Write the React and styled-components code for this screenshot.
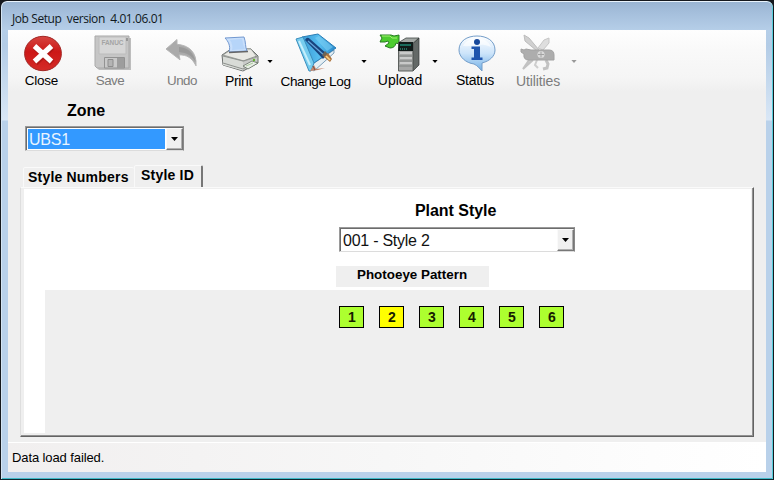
import React from 'react';
import styled, { createGlobalStyle } from 'styled-components';

const Global = createGlobalStyle`
  * { box-sizing: border-box; }
  html, body { margin: 0; background: #15181d; overflow: hidden; }
  body { font-family: "Liberation Sans", Arial, sans-serif; color: #000; }
`;
const Window = styled.main`
  width: 774px; height: 480px; display: flex; flex-direction: column;
  border: 1px solid #15181d; border-bottom-color: #102a32; border-radius: 7px 7px 0 0;
  padding: 0 7px 7px;
  box-shadow: inset 0 1px #e8f2fb, inset 1px 0 #d5e5f3, inset -1px 0 #56cdda, inset 0 -1px #3fbac8;
  background: linear-gradient(#98b3d1 0, #a5bfdc 12px, #b5cee8 29px, #b3cce6 45px, #d9e7f6 119px, #b9d1ea 120px, #b9d1ea 100%);
`;
const TitleBar = styled.header`
  height: 29px; flex: none; padding: 9px 0 0 4px; white-space: pre;
  font: 12px/18px "Open Sans", "Noto Sans", sans-serif; letter-spacing: -0.42px; color: #101820;
`;
const Client = styled.div`
  height: 442px; width: 758px; display: flex; flex-direction: column; background: #efefef;
`;
const Toolbar = styled.nav`
  height: 61px; flex: none; display: grid;
  grid-template-columns: 67px 70px 74px 39px 23px 69px 28px 44px 25px 56px 70px 1px;
  background: linear-gradient(#fefefe 0, #f9f9f9 20px, #f5f5f5 48px, #efefef 61px);
`;
const Tool = styled.div`
  display: flex; flex-direction: column; align-items: center;
  color: ${p => (p.$disabled ? '#7c7c7c' : '#000')};
`;
const IconBox = styled.div`
  height: 42px; flex: none; padding-top: 4px; margin-left: ${p => p.$shift || 0}px;
  svg { display: block; overflow: visible; }
`;
const Caption = styled.span`
  white-space: nowrap; font-size: ${p => p.$size || 14}px; letter-spacing: ${p => p.$spacing || 0}px;
  line-height: 16px; margin-top: ${p => p.$drop || 0}px;
`;
const Arrow = styled.div`
  display: flex; justify-content: center; padding-top: 30px;
  svg { flex: none; display: block; width: 6px; height: 3px; fill: ${p => (p.$disabled ? '#999' : '#000')}; }
`;
const ZoneArea = styled.section`
  padding: 11px 0 0 17px; height: 74px; flex: none;
`;
const Heading = styled.h2`
  margin: 0; font-size: 16px; line-height: 18px; font-weight: bold; letter-spacing: -0.05px; text-indent: ${p => p.$indent}px;
`;
const Combo = styled.div`
  display: flex; align-items: stretch; width: ${p => p.$width}px; height: ${p => p.$height}px; margin-top: ${p => p.$top}px;
  background: #fff; border: 1px solid #9a9a9a; border-right-color: #888; border-bottom-color: #dcdcdc;
  box-shadow: inset 1px 1px #6c6c6c; padding: 1px 0 0 1px;
`;
const ComboValue = styled.div`
  flex: 1; margin: 1px; padding-left: 1px; font-size: 16px; letter-spacing: -0.25px; line-height: 21px;
  background: ${p => (p.$selected ? '#3399ff' : '#fff')}; color: ${p => (p.$selected ? '#e9f4ff' : '#111')};
`;
const ComboButton = styled.div`
  width: 17px; display: flex; align-items: center; justify-content: center; background: #f0f0f0;
  border: 1px solid #fafafa; border-right-color: #777; border-bottom-color: #777;
  box-shadow: inset -1px -1px #b0b0b0;
  svg { display: block; width: 7px; height: 4px; }
`;
const Tabs = styled.div`
  height: 22px; flex: none; display: flex; align-items: flex-end; padding-left: 15px;
`;
const Tab = styled.div`
  width: ${p => p.$width}px; height: ${p => (p.$active ? 22 : 20)}px; padding-left: ${p => (p.$active ? 6 : 4)}px;
  font-size: 14px; font-weight: bold; line-height: ${p => (p.$active ? 19 : 19)}px; letter-spacing: ${p => p.$spacing}px;
  white-space: nowrap; border-top: 1px solid #fafafa; border-left: 1px solid #f9f9f9;
  border-right: ${p => (p.$active ? '2px solid #777' : '0')}; border-radius: 2px 2px 0 0;
`;
const Panel = styled.section`
  width: 734px; height: 250px; margin-left: 12px; flex: none; padding: 1px 2px 1px 3px;
  border: 1px solid #fafafa; border-left-color: #dedede; border-right: 1px solid #636363; border-bottom: 1px solid #636363;
  box-shadow: inset -1px -1px #929292;
`;
const StyleForm = styled.div`
  height: 101px; background: #fff; padding: 13px 0 0 315px;
`;
const PatternLabel = styled.div`
  width: 153px; height: 21px; margin: 14px 0 0 -3px; padding-left: 21px; background: #efefef;
  font-size: 13.4px; font-weight: bold; line-height: 17px; white-space: nowrap;
`;
const PatternArea = styled.div`
  height: 143px; border-left: 21px solid #fff; padding: 16px 0 0 294px; display: flex; gap: 15px;
`;
const Eye = styled.div`
  width: 25px; height: 22px; border: 1px solid #000; background: ${p => (p.$clear ? '#ffff00' : '#adff2f')};
  font-size: 14px; font-weight: bold; line-height: 20px; text-align: center; padding-left: 1px; color: #171c00;
`;
const StatusBar = styled.footer`
  height: 30px; margin-top: auto; padding: 6px 0 0 4px; border-top: 1px solid #fff;
  font-size: 13px; letter-spacing: -0.1px; line-height: 18px;
  background: linear-gradient(90deg, #f1efef, #f7f7f7 50%, #fdfdfd 85%, #fff);
`;

const Triangle = () => <svg viewBox="0 0 7 4"><path d="M0 0h7L3.5 4z" /></svg>;

const CloseIcon = () => (
  <svg width="38" height="38" viewBox="0 0 38 38">
    <defs><linearGradient id="red" x2="0" y2="1"><stop stopColor="#d64540" /><stop offset=".45" stopColor="#cc1817" /><stop offset="1" stopColor="#d42b27" /></linearGradient></defs>
    <ellipse cx="19" cy="19.5" rx="18.4" ry="17.2" fill="url(#red)" stroke="#a32927" />
    <path d="M10.5 12l17 16M27.5 12l-17 16" stroke="#8f1210" strokeWidth="6.5" opacity=".45" transform="translate(.7 1)" />
    <path d="M10.5 12l17 15.5M27.5 12l-17 15.5" stroke="#fff" strokeWidth="5.2" />
  </svg>
);
const SaveIcon = () => (
  <svg width="38" height="38" viewBox="0 0 38 38">
    <path d="M3 4h34v32H5l-2-2z" fill="#bdbdbd" />
    <path d="M1 2h34v32H3l-2-2z" fill="#c6c6c6" stroke="#a9a9a9" />
    <path d="M5 3h27v17H5z" fill="#d6d6d6" stroke="#bcbcbc" />
    <text x="7.5" y="10.5" fontSize="6.5" fontWeight="bold" textLength="22" fill="#a4a4a4">FANUC</text>
    <path d="M33 4v3" stroke="#888" strokeWidth="1.5" />
    <path d="M10.5 23.5h20V34h-20z" fill="#c9c9c9" stroke="#929292" />
    <path d="M14 25.5h5v7h-5z" fill="#b4b4b4" stroke="#8d8d8d" /><path d="M23 24h7v10h-7z" fill="#9d9d9d" />
  </svg>
);
const UndoIcon = () => (
  <svg width="34" height="38" viewBox="0 0 34 38">
    <path d="M1 15L12 5.5v4.8c12 1 20 8 19 21.5-4-8-9-11-17-11l1 5z" fill="#aaa" stroke="#b5b5b5" strokeLinejoin="round" />
    <path d="M14 13c10 1 14 6 17 15-5-7-9-9-17-10z" fill="#999" />
  </svg>
);
const PrintIcon = () => (
  <svg width="38" height="38" viewBox="0 0 38 38">
    <path d="M1 21l9-6h20l7 7v7L22 37 2 31z" fill="#c9cbc9" stroke="#6c706e" />
    <path d="M2 21l9-6h19l6 8-13 4z" fill="#e9e9e4" stroke="#858985" strokeWidth=".7" />
    <path d="M8 18c2-6-1-11-4-14l19-1c2 5 1 10 3 14z" fill="#c8dffb" stroke="#7298d0" />
    <path d="M11 16c1-4 0-7-2-10l12-1c1 4 1 7 3 10z" fill="#a8ccf8" opacity=".55" />
    <path d="M8 18.5l19-1" stroke="#666" strokeWidth="1.5" />
    <path d="M2 22l20 5.5v9L2 31z" fill="#d8dbd7" /><path d="M2 29l20 6 14-7M2 22l20 5 14-5" stroke="#8d918d" fill="none" />
    <path d="M22 32l9-5 6 2-10 6z" fill="#e8eee6" stroke="#667165" strokeWidth=".8" /><path d="M25 32l7-3" stroke="#aac99c" />
    <circle cx="33" cy="26" r="1.2" fill="#63b52f" />
  </svg>
);
const LogIcon = () => (
  <svg width="42" height="40" viewBox="0 0 42 40">
    <defs><linearGradient id="book"><stop stopColor="#389bd7" /><stop offset=".5" stopColor="#56bdef" /><stop offset="1" stopColor="#2687cb" /></linearGradient></defs>
    <path d="M16 31l23-15v3L19 37l-5-3z" fill="#e5eef3" stroke="#4b7da1" strokeWidth=".7" />
    <path d="M7 3L23 0l18 14-25 17z" fill="url(#book)" stroke="#2b7eb5" />
    <path d="M1 5l7-2 11 26-3 8h-2z" fill="#76cdef" stroke="#3a8dbd" /><path d="M4 7l11 24" stroke="#c4eefb" strokeWidth="2" />
    <path d="M20 4l4-2 14 11-6 4z" fill="#7ccff4" opacity=".6" />
    <path d="M10 6q2-4 5-1l17 15-4 5z" fill="#18447e" /><path d="M13 7l17 15" stroke="#65a6dc" strokeWidth="1.3" />
    <path d="M27 21l3-4 3 3-3 4z" fill="#6c6458" /><path d="M29 23l4-4 4 6-2 3z" fill="#ad743e" /><path d="M31 22l4 4" stroke="#ffd184" strokeWidth="1.7" />
    <path d="M15 37l4-6 2 4 9-1-7 2z" fill="#c4856a" /><path d="M18 32l2 4" stroke="#7b4f40" />
  </svg>
);
const UploadIcon = () => (
  <svg width="42" height="38" viewBox="0 0 42 38">
    <path d="M1 1h11l3 1 5-1v9l-3-1q-1 5-6 5l-5-2 4-3-1-2-3 1H1l2-4z" fill="#4dcc2f" stroke="#287c22" strokeLinejoin="round" />
    <path d="M3 2h8l2 2h5" stroke="#a1f173" fill="none" />
    <path d="M19 9l8-5h13l-6 5z" fill="#a3a8a5" stroke="#404745" strokeWidth=".8" /><path d="M34 10l6-6v27l-6 6z" fill="#646967" stroke="#303533" strokeWidth=".7" />
    <path d="M19.5 9H34v28H19.5z" fill="#a6a7a6" stroke="#5c605e" />
    <path d="M20 8h14v9H19z" fill="#101a18" /><path d="M21 11h11" stroke="#209781" strokeWidth="1.3" /><path d="M21 15h7" stroke="#35bba0" strokeDasharray="1 1" />
    <path d="M21 19h12M21 24h12M21 29h12" stroke="#c9cac9" strokeWidth="2" /><path d="M20 22h13M20 27h13M20 32h13" stroke="#7e8280" />
  </svg>
);
const StatusIcon = () => (
  <svg width="38" height="38" viewBox="0 0 38 38">
    <defs><linearGradient id="bubble" x2="0" y2="1"><stop stopColor="#fff" /><stop offset=".5" stopColor="#cce4fa" /><stop offset="1" stopColor="#71afe5" /></linearGradient></defs>
    <path d="M19 2C9 2 1 7 1 16c0 7 7 13 15 14 4 2 5 4 8 7v-8c8-2 13-7 13-13C37 7 29 2 19 2z" fill="url(#bubble)" stroke="#739dc9" />
    <path d="M5 12C9 3 28 1 33 13 22 8 16 13 5 12z" fill="#fff" opacity=".6" />
    <circle cx="19" cy="8" r="3" fill="#16489b" /><path d="M13.5 12.5H22V23.5h2.5V26h-11v-2.5H16V15h-2.5z" fill="#1f55ad" />
  </svg>
);
const UtilitiesIcon = () => (
  <svg width="36" height="38" viewBox="0 0 36 38">
    <path d="M17 17L5 7l-1-6 5 3 10 12z" fill="#d0d0d0" stroke="#bcbcbc" /><path d="M18 14l6-8 5-2v5l-6 7z" fill="#dedede" stroke="#c6c6c6" />
    <path d="M9 26l-6 9 10-9" fill="#ccc" stroke="#c2c2c2" strokeWidth="2" />
    <path d="M17 26l-2 5 3 3" fill="none" stroke="#cecece" strokeWidth="2" />
    <path d="M26 26l2 4-1 4-4 1" fill="none" stroke="#c2c2c2" strokeWidth="3" />
    <path d="M1 15l3 1 2-1 5 1h18q5 0 5 5v5H9q-6 0-5-6l-3-2z" fill="#adadad" stroke="#a2a2a2" />
    <circle cx="21" cy="20.5" r="3.6" fill="#d9d9d9" /><path d="M18 20.5h6M21 17.5v6" stroke="#a2a2a2" />
  </svg>
);

const tools = [
  { text: 'Close', Icon: CloseIcon, shift: 3, drop: 1, size: 13.5, spacing: -0.25 },
  { text: 'Save', Icon: SaveIcon, shift: 5, drop: 1, size: 13.4, spacing: -0.5, disabled: true },
  { text: 'Undo', Icon: UndoIcon, drop: 1, size: 13.4, spacing: -0.5, disabled: true },
  { text: 'Print', Icon: PrintIcon, shift: 2, drop: 1, spacing: -0.4, menu: true },
  { text: 'Change Log', Icon: LogIcon, drop: 2, size: 13.6, spacing: -0.4, menu: true },
  { text: 'Upload', Icon: UploadIcon, menu: true },
  { text: 'Status', Icon: StatusIcon, shift: 3, spacing: -0.3 },
  { text: 'Utilities', Icon: UtilitiesIcon, drop: 1, spacing: -0.12, disabled: true, menu: true },
];

export default function App() {
  return (
    <><Global /><Window>
      <TitleBar>{'Job Setup  version  4.01.06.01'}</TitleBar>
      <Client>
        <Toolbar>
          {tools.map(({ text, Icon, shift, size, spacing, drop, disabled, menu }) => (
            <React.Fragment key={text}>
              <Tool $disabled={disabled}><IconBox $shift={shift}><Icon /></IconBox><Caption $size={size} $spacing={spacing} $drop={drop}>{text}</Caption></Tool>
              {menu && <Arrow $disabled={disabled}><Triangle /></Arrow>}
            </React.Fragment>
          ))}
        </Toolbar>
        <ZoneArea>
          <Heading $indent={42}>Zone</Heading>
          <Combo $width={159} $height={25} $top={6}><ComboValue $selected>UBS1</ComboValue><ComboButton><Triangle /></ComboButton></Combo>
        </ZoneArea>
        <Tabs><Tab $width={111} $spacing={0.2}>Style Numbers</Tab><Tab $active $width={69} $spacing={0.2}>Style ID</Tab></Tabs>
        <Panel>
          <StyleForm>
            <Heading $indent={76}>Plant Style</Heading>
            <Combo $width={236} $height={25} $top={7}><ComboValue>001 - Style 2</ComboValue><ComboButton><Triangle /></ComboButton></Combo>
            <PatternLabel>Photoeye Pattern</PatternLabel>
          </StyleForm>
          <PatternArea>{[1, 2, 3, 4, 5, 6].map(n => <Eye key={n} $clear={n === 2}>{n}</Eye>)}</PatternArea>
        </Panel>
        <StatusBar>Data load failed.</StatusBar>
      </Client>
    </Window></>
  );
}
